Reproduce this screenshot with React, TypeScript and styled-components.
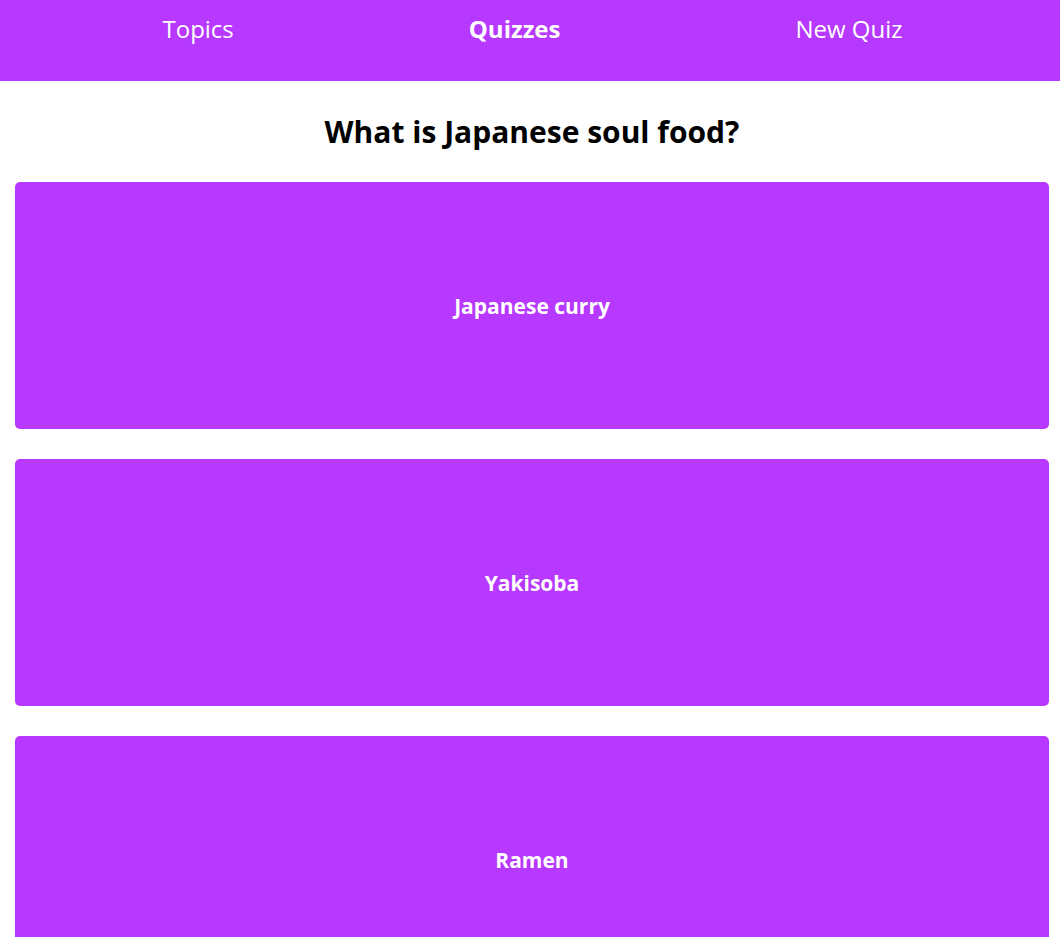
import React from "react";
import styled, { createGlobalStyle } from "styled-components";

const purple = "#b738ff";

const GlobalStyle = createGlobalStyle`
  html, body { margin: 0; padding: 0; background: #ffffff; }
  body { font-family: "Open Sans", "Noto Sans", sans-serif; color: #000; }
  * { box-sizing: border-box; }
`;

const NavBar = styled.nav`
  background: ${purple};
  height: 81px;
`;

const NavList = styled.ul`
  list-style: none;
  margin: 0;
  padding: 12px 40px 0 45px;
  display: flex;
  justify-content: space-around;
  align-items: flex-start;
`;

const NavItem = styled.li<{ $active?: boolean }>`
  color: #ffffff;
  font-size: 24px;
  line-height: 34px;
  font-weight: ${(p) => (p.$active ? 700 : 400)};
  cursor: pointer;
`;

const Main = styled.main`
  padding: 0 11px 0 15px;
`;

const Question = styled.h1`
  margin: 0;
  padding: 31px 0 30px;
  text-align: center;
  font-size: 30px;
  line-height: 40px;
  font-weight: 700;
`;

const AnswerList = styled.div`
  display: flex;
  flex-direction: column;
  gap: 30px;
`;

const AnswerCard = styled.button`
  height: 247px;
  width: 100%;
  border: none;
  border-radius: 5px;
  background: ${purple};
  color: #ffffff;
  font-family: "Open Sans", "Noto Sans", sans-serif;
  font-size: 21px;
  font-weight: 700;
  display: flex;
  align-items: center;
  justify-content: center;
  cursor: pointer;
  padding: 0;
`;

const answers = ["Japanese curry", "Yakisoba", "Ramen"];

export default function App() {
  return (
    <>
      <GlobalStyle />
      <NavBar>
        <NavList>
          <NavItem>Topics</NavItem>
          <NavItem $active>Quizzes</NavItem>
          <NavItem>New Quiz</NavItem>
        </NavList>
      </NavBar>
      <Main>
        <Question>What is Japanese soul food?</Question>
        <AnswerList>
          {answers.map((a) => (
            <AnswerCard key={a}>{a}</AnswerCard>
          ))}
        </AnswerList>
      </Main>
    </>
  );
}
